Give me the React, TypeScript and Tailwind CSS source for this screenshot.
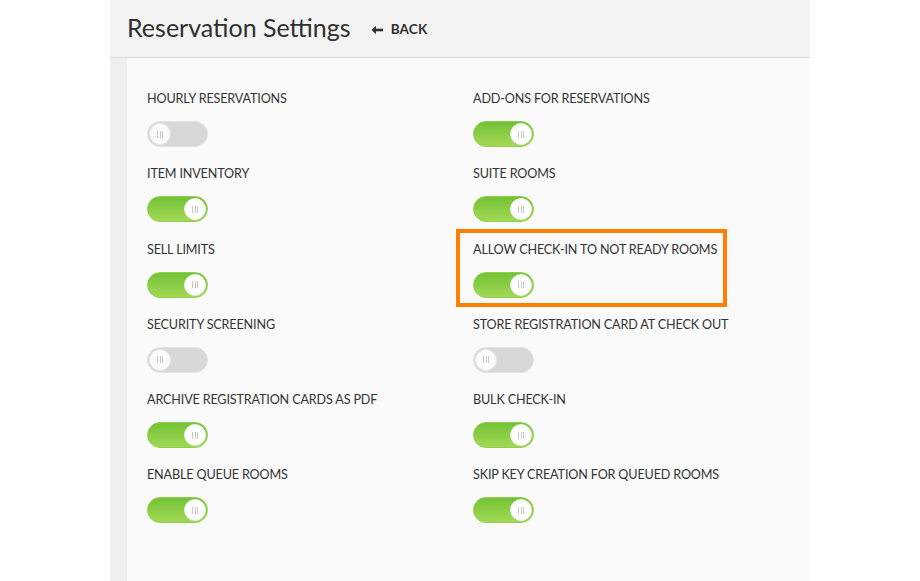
import React from "react";

type Item = { label: string; on: boolean; highlight?: boolean };

const left: Item[] = [
  { label: "HOURLY RESERVATIONS", on: false },
  { label: "ITEM INVENTORY", on: true },
  { label: "SELL LIMITS", on: true },
  { label: "SECURITY SCREENING", on: false },
  { label: "ARCHIVE REGISTRATION CARDS AS PDF", on: true },
  { label: "ENABLE QUEUE ROOMS", on: true },
];

const right: Item[] = [
  { label: "ADD-ONS FOR RESERVATIONS", on: true },
  { label: "SUITE ROOMS", on: true },
  { label: "ALLOW CHECK-IN TO NOT READY ROOMS", on: true, highlight: true },
  { label: "STORE REGISTRATION CARD AT CHECK OUT", on: false },
  { label: "BULK CHECK-IN", on: true },
  { label: "SKIP KEY CREATION FOR QUEUED ROOMS", on: true },
];

function Toggle({ on }: { on: boolean }) {
  return (
    <div
      className={
        on
          ? "relative w-[61px] h-[26px] rounded-full bg-gradient-to-b from-[#72c236] to-[#a3d954] border border-[#8fd04a]"
          : "relative w-[61px] h-[26px] rounded-full bg-[#d8d8d8] border border-[#e2e2e2]"
      }
    >
      <div
        className={
          on
            ? "absolute top-[1px] right-[1px] w-[22px] h-[22px] rounded-full bg-white border border-[#eeeeee] flex items-center justify-center gap-[1.5px]"
            : "absolute top-[1px] left-[1px] w-[22px] h-[22px] rounded-full bg-[#fbfbfb] border border-[#e6e6e6] flex items-center justify-center gap-[1.5px]"
        }
      >
        <span className="w-px h-[7px] bg-[#c8c8c8]" />
        <span className="w-px h-[7px] bg-[#c8c8c8]" />
        <span className="w-px h-[7px] bg-[#c8c8c8]" />
      </div>
    </div>
  );
}

function Cell({ item }: { item: Item }) {
  return (
    <div className="relative h-[75.3px]">
      {item.highlight && (
        <div className="absolute left-[-17px] top-[-10px] w-[271px] h-[78px] border-4 border-[#ff8000]" />
      )}
      <div className="h-[20px] pt-[1px] leading-[20px] text-[12.6px] text-[#333333] tracking-[-0.15px]">{item.label}</div>
      <div className="mt-[13px]">
        <Toggle on={item.on} />
      </div>
    </div>
  );
}

export default function App() {
  return (
    <div className="w-[920px] h-[581px] bg-white flex justify-center overflow-hidden" style={{ fontFamily: '"Lato", "Noto Sans", sans-serif' }}>
      <div className="w-[700px] h-full flex flex-col bg-[#f0f0f0]">
        <div className="h-[58px] bg-[#f3f3f3] border-b border-[#dadada] flex items-center pl-[17px] shrink-0">
          <div className="text-[25px] text-[#2f2f2f] leading-none pb-[2px]">Reservation Settings</div>
          <div className="ml-[20px] flex items-center gap-[8px] text-[#2f2f2f] pt-[2px]">
            <svg width="12" height="10" viewBox="0 0 12 10">
              <path d="M0.5 5 L5 0.8 L5 9.2 Z" fill="#2f2f2f" />
              <path d="M4 5 H12" stroke="#2f2f2f" strokeWidth="2.6" />
            </svg>
            <span className="text-[13.5px] font-bold tracking-[0.2px]">BACK</span>
          </div>
        </div>
        <div className="flex-1 flex">
          <div className="w-[17px] bg-[#efefef]" />
          <div className="flex-1 bg-[#fafafa] pt-[30px] pl-[20px] grid grid-cols-[326px_1fr]">
            <div className="flex flex-col">
              {left.map((it) => (
                <Cell key={it.label} item={it} />
              ))}
            </div>
            <div className="flex flex-col">
              {right.map((it) => (
                <Cell key={it.label} item={it} />
              ))}
            </div>
          </div>
        </div>
      </div>
    </div>
  );
}
